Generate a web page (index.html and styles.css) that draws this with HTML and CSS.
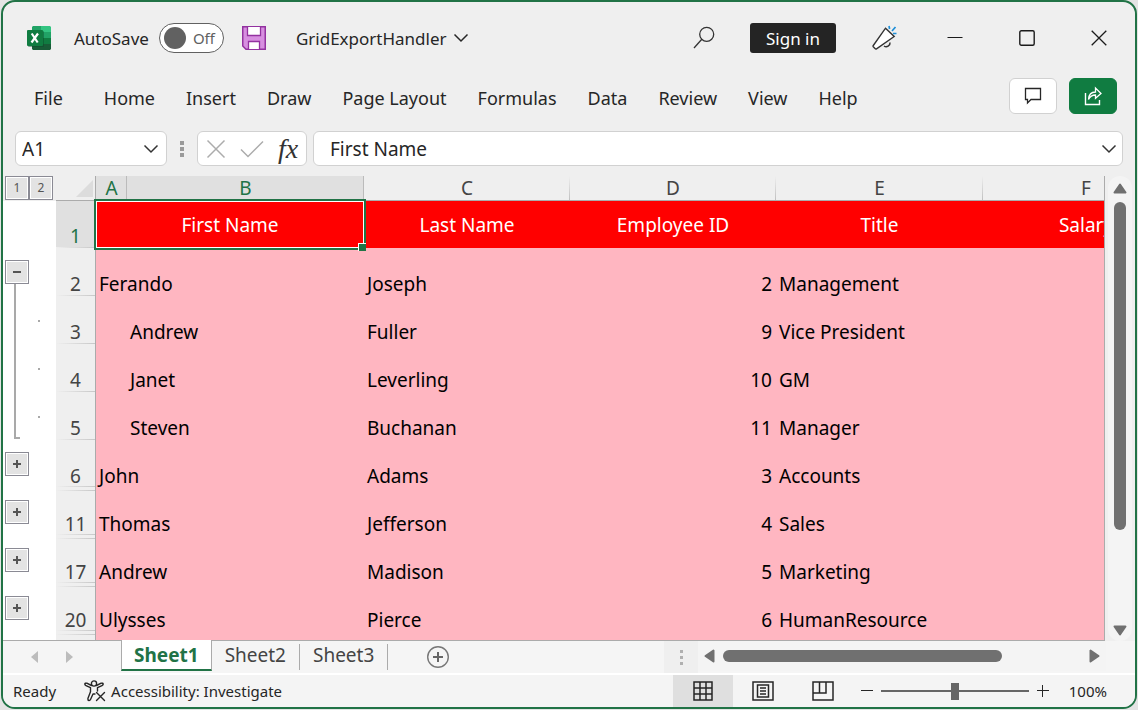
FILE: index.html
```html
<!DOCTYPE html>
<html lang="en">
<head>
<meta charset="utf-8">
<title>GridExportHandler</title>
<link rel="stylesheet" href="styles.css">
</head>
<body>
<div class="window">
  <header class="titlebar">
    <svg class="logo" width="24" height="24" viewBox="0 0 24 24" aria-hidden="true">
      <path fill="#21a366" d="M6 0h9v6H5V1z"/><path fill="#33c481" d="M14 0h9l1 1v5H14z"/>
      <path fill="#107c41" d="M5 6h9v6H5z"/><path fill="#21a366" d="M14 6h10v6H14z"/>
      <path fill="#185c37" d="M5 12h9v6h10v5l-1 1H6l-1-1z"/><path fill="#107c41" d="M14 12h10v6H14z"/>
      <rect x="1" y="5" width="16" height="16" rx="1" fill="#0b4a2a" opacity=".45"/>
      <rect x="0" y="4" width="16" height="16" rx="1" fill="#107c41"/>
      <path d="M4.700 7.500l6 9M11 7.500l-6.500 9" stroke="#fff" stroke-width="2.200" fill="none"/>
    </svg>
    <label class="autosave" for="autosave">AutoSave</label>
    <span class="toggle"><input id="autosave" type="checkbox" role="switch"><span class="toggle-text">Off</span></span>
    <button class="plain save" aria-label="Save">
      <svg width="24" height="24" viewBox="0 0 24 24"><path d="M.750.750h22.500v22.500H4L.750 20z" fill="#d78fe0" stroke="#9332a0" stroke-width="1.500"/><path d="M5.500 1v8.500h13V1" fill="#fff" stroke="#9332a0" stroke-width="1.300"/><path d="M6.500 23v-7.500h11V23" fill="#fff" stroke="#9332a0" stroke-width="1.300"/></svg>
    </button>
    <button class="plain doc">GridExportHandler
      <svg width="16" height="10" viewBox="0 0 16 10"><path d="M1.500 1.500L8 8l6.500-6.500" fill="none" stroke="#262626" stroke-width="1.500"/></svg>
    </button>
    <span class="grow"></span>
    <button class="plain search" aria-label="Search">
      <svg width="22" height="24" viewBox="0 0 22 24"><circle cx="13.700" cy="8.300" r="7" fill="none" stroke="#333" stroke-width="1.300"/><path d="M8.800 13.300L1 22" stroke="#333" stroke-width="1.300"/></svg>
    </button>
    <button class="signin">Sign in</button>
    <button class="plain news" aria-label="What's new">
      <svg width="26" height="26" viewBox="0 0 26 26"><path d="M12 21a3.800 3.800 0 0 0 6-3.500" fill="none" stroke="#333" stroke-width="1.500"/><path d="M13.500 3.200L22.200 11.500 4.500 23.800Q3.700 24.300 3 23.500L1.300 21.800Q.800 21.200 1.300 20.500z" fill="#fff" stroke="#333" stroke-width="1.400"/><path d="M17 1l.6 3M20 6l3.500-4M21 8.500h3.500" stroke="#1e8fd8" stroke-width="1.700"/></svg>
    </button>
    <button class="plain caption" aria-label="Minimize"><svg width="16" height="16" viewBox="0 0 16 16"><path d="M.5 7.500h15" stroke="#1b1b1b" stroke-width="1.200"/></svg></button>
    <button class="plain caption" aria-label="Maximize"><svg width="16" height="16" viewBox="0 0 16 16"><rect x=".8" y=".8" width="14.400" height="14.400" rx="1.500" fill="none" stroke="#1b1b1b" stroke-width="1.400"/></svg></button>
    <button class="plain caption" aria-label="Close"><svg width="16" height="16" viewBox="0 0 16 16"><path d="M.7.7l14.600 14.600M15.300.7L.7 15.300" stroke="#1b1b1b" stroke-width="1.300"/></svg></button>
  </header>

  <nav class="ribbon">
    <button class="plain file">File</button>
    <button class="plain">Home</button>
    <button class="plain">Insert</button>
    <button class="plain">Draw</button>
    <button class="plain">Page Layout</button>
    <button class="plain">Formulas</button>
    <button class="plain">Data</button>
    <button class="plain">Review</button>
    <button class="plain">View</button>
    <button class="plain">Help</button>
    <span class="grow"></span>
    <button class="action" aria-label="Comments"><svg width="18" height="18" viewBox="0 0 18 18"><path d="M1.500 1.500h15v11H7l-3.500 3.500v-3.500h-2z" fill="none" stroke="#262626" stroke-width="1.300"/></svg></button>
    <button class="action share" aria-label="Share"><svg width="18" height="20" viewBox="0 0 18 20"><path d="M1.500 7v11.500h14V14" fill="none" stroke="#fff" stroke-width="1.400"/><path d="M4.500 13.500c.3-5 3-7.500 7-7.500V2l5.500 5.500-5.500 4.800V9c-3.200 0-5.500 1.500-7 4.500z" fill="none" stroke="#fff" stroke-width="1.300"/></svg></button>
  </nav>

  <div class="formula-row">
    <div class="box name-box">
      <input type="text" value="A1" aria-label="Name box">
      <button class="plain" aria-label="Names"><svg width="16" height="10" viewBox="0 0 16 10"><path d="M1.500 1.500L8 8l6.500-6.500" fill="none" stroke="#333" stroke-width="1.500"/></svg></button>
    </div>
    <svg class="grip" width="4" height="16" viewBox="0 0 4 16" aria-hidden="true"><path d="M0 0h4v4H0zM0 6h4v4H0zM0 12h4v4H0z" fill="#9a9a9a"/></svg>
    <div class="box fx-box">
      <button class="plain" aria-label="Cancel"><svg width="20" height="20" viewBox="0 0 20 20"><path d="M1.500 1.500l17 17M18.500 1.500l-17 17" stroke="#acacac" stroke-width="1.500"/></svg></button>
      <button class="plain" aria-label="Enter"><svg width="24" height="18" viewBox="0 0 24 18"><path d="M1 9.500L8 16.500 23 1.500" fill="none" stroke="#acacac" stroke-width="1.500"/></svg></button>
      <button class="plain fx" aria-label="Insert function">fx</button>
    </div>
    <div class="box formula-box">
      <input type="text" value="First Name" aria-label="Formula bar">
      <button class="plain" aria-label="Expand formula bar"><svg width="16" height="10" viewBox="0 0 16 10"><path d="M1.500 1.500L8 8l6.500-6.500" fill="none" stroke="#333" stroke-width="1.500"/></svg></button>
    </div>
  </div>

  <main class="workspace">
    <div class="viewport">
      <table class="sheet">
        <colgroup><col class="c-outline"><col class="c-head"><col class="c-a"><col class="c-b"><col class="c-c"><col class="c-c"><col class="c-e"><col class="c-c"></colgroup>
        <thead>
          <tr>
            <td class="levels"><button class="mini">1</button><button class="mini">2</button></td>
            <td class="corner"><svg width="17" height="17" viewBox="0 0 17 17"><path d="M17 0v17H0z" fill="#dcdcdc"/></svg></td>
            <th class="on" scope="col">A</th><th class="on" scope="col">B</th><th scope="col">C</th><th scope="col">D</th><th scope="col">E</th><th scope="col">F</th>
          </tr>
        </thead>
        <tbody>
          <tr class="titles">
            <td class="outline"></td><th class="on" scope="row">1</th>
            <td class="selected" colspan="2">First Name</td><td>Last Name</td><td>Employee ID</td><td>Title</td><td>Salary</td>
          </tr>
          <tr><td class="outline stem"><button class="mini" aria-label="Collapse"><svg width="10" height="10" viewBox="0 0 10 10"><path d="M1 5h8" stroke="#555" stroke-width="2"/></svg></button></td><th scope="row">2</th><td colspan="2">Ferando</td><td>Joseph</td><td class="num">2</td><td>Management</td><td></td></tr>
          <tr><td class="outline branch"></td><th scope="row">3</th><td></td><td>Andrew</td><td>Fuller</td><td class="num">9</td><td>Vice President</td><td></td></tr>
          <tr><td class="outline branch"></td><th scope="row">4</th><td></td><td>Janet</td><td>Leverling</td><td class="num">10</td><td>GM</td><td></td></tr>
          <tr><td class="outline branch last"></td><th scope="row">5</th><td></td><td>Steven</td><td>Buchanan</td><td class="num">11</td><td>Manager</td><td></td></tr>
          <tr><td class="outline"><button class="mini" aria-label="Expand"><svg width="10" height="10" viewBox="0 0 10 10"><path d="M1 5h8M5 1v8" stroke="#555" stroke-width="2"/></svg></button></td><th class="fold" scope="row">6</th><td colspan="2">John</td><td>Adams</td><td class="num">3</td><td>Accounts</td><td></td></tr>
          <tr><td class="outline"><button class="mini" aria-label="Expand"><svg width="10" height="10" viewBox="0 0 10 10"><path d="M1 5h8M5 1v8" stroke="#555" stroke-width="2"/></svg></button></td><th class="fold after-fold" scope="row">11</th><td colspan="2">Thomas</td><td>Jefferson</td><td class="num">4</td><td>Sales</td><td></td></tr>
          <tr><td class="outline"><button class="mini" aria-label="Expand"><svg width="10" height="10" viewBox="0 0 10 10"><path d="M1 5h8M5 1v8" stroke="#555" stroke-width="2"/></svg></button></td><th class="fold after-fold" scope="row">17</th><td colspan="2">Andrew</td><td>Madison</td><td class="num">5</td><td>Marketing</td><td></td></tr>
          <tr><td class="outline"><button class="mini" aria-label="Expand"><svg width="10" height="10" viewBox="0 0 10 10"><path d="M1 5h8M5 1v8" stroke="#555" stroke-width="2"/></svg></button></td><th class="fold after-fold" scope="row">20</th><td colspan="2">Ulysses</td><td>Pierce</td><td class="num">6</td><td>HumanResource</td><td></td></tr>
          <tr><td class="outline"></td><th class="after-fold" scope="row"></th><td colspan="2"></td><td></td><td></td><td></td><td></td></tr>
        </tbody>
      </table>
    </div>
    <div class="vscroll">
      <button class="plain" aria-label="Scroll up"><svg width="14" height="11" viewBox="0 0 14 11"><path d="M7 1.500L12.500 9.500h-11z" fill="#707070" stroke="#707070" stroke-width="2" stroke-linejoin="round"/></svg></button>
      <div class="track"><div class="thumb"></div></div>
      <button class="plain" aria-label="Scroll down"><svg width="14" height="11" viewBox="0 0 14 11"><path d="M7 9.500L12.500 1.500h-11z" fill="#707070" stroke="#707070" stroke-width="2" stroke-linejoin="round"/></svg></button>
    </div>
  </main>

  <div class="tabs">
    <button class="plain arrow" aria-label="Previous sheet"><svg width="7" height="12" viewBox="0 0 7 12"><path d="M7 0v12L0 6z" fill="#bcbcbc"/></svg></button>
    <button class="plain arrow" aria-label="Next sheet"><svg width="7" height="12" viewBox="0 0 7 12"><path d="M0 0v12l7-6z" fill="#bcbcbc"/></svg></button>
    <button class="plain tab current">Sheet1</button>
    <button class="plain tab">Sheet2</button>
    <button class="plain tab">Sheet3</button>
    <button class="plain add" aria-label="New sheet"><svg width="24" height="24" viewBox="0 0 24 24"><circle cx="12" cy="12" r="10.300" fill="none" stroke="#777" stroke-width="1.400"/><path d="M7 12h10M12 7v10" stroke="#666" stroke-width="2"/></svg></button>
    <span class="grow"></span>
    <div class="splitter"><svg width="3" height="15" viewBox="0 0 3 15"><path d="M0 0h3v3H0zM0 6h3v3H0zM0 12h3v3H0z" fill="#b0b0b0"/></svg></div>
    <div class="hscroll">
      <button class="plain" aria-label="Scroll left"><svg width="11" height="14" viewBox="0 0 11 14"><path d="M1.500 7L9.500 1.500v11z" fill="#707070" stroke="#707070" stroke-width="2" stroke-linejoin="round"/></svg></button>
      <div class="track"><div class="thumb"></div></div>
      <button class="plain" aria-label="Scroll right"><svg width="11" height="14" viewBox="0 0 11 14"><path d="M9.500 7L1.500 1.500v11z" fill="#707070" stroke="#707070" stroke-width="2" stroke-linejoin="round"/></svg></button>
    </div>
  </div>

  <footer class="status">
    <span class="ready">Ready</span>
    <button class="plain access">
      <svg width="22" height="22" viewBox="0 0 22 22"><g fill="none" stroke="#262626" stroke-width="1.400" stroke-linejoin="round" stroke-linecap="round"><circle cx="10" cy="3.500" r="2.600"/><path d="M7.500 5.500L2.800 3.200Q1 2.800.8 4.200 1 5.300 2 5.700l4.500 2v4l-2.600 6.800q-.3 1.700 1 2 1.100.1 1.600-1L9 14h2"/><path d="M12.500 5.500l4.700-2.300q1.800-.4 2 1-.2 1.100-1.200 1.500l-4.500 2V11"/><path d="M12.500 12.500l8 8M20.500 12.500l-8 8"/></g></svg>
      Accessibility: Investigate
    </button>
    <span class="grow"></span>
    <button class="plain view active" aria-label="Normal view"><svg width="20" height="20" viewBox="0 0 20 20"><path d="M1 1h18v18H1zM7 1v18M13 1v18M1 7h18M1 13h18" fill="none" stroke="#262626" stroke-width="1.500"/></svg></button>
    <button class="plain view" aria-label="Page layout view"><svg width="22" height="20" viewBox="0 0 22 20"><path d="M1 1h20v18H1zM5.500 4h11v12h-11z" fill="none" stroke="#262626" stroke-width="1.500"/><path d="M8 7h6M8 10h6M8 13h6" stroke="#262626" stroke-width="1.300"/></svg></button>
    <button class="plain view" aria-label="Page break preview"><svg width="22" height="20" viewBox="0 0 22 20"><path d="M1 1h20v18H1zM1 12h13V1M7.500 1v11" fill="none" stroke="#262626" stroke-width="1.500"/></svg></button>
    <button class="plain step" aria-label="Zoom out"><svg width="12" height="12" viewBox="0 0 12 12"><path d="M0 5.500h12" stroke="#262626" stroke-width="1"/></svg></button>
    <input class="zoom" type="range" min="0" max="100" value="50" aria-label="Zoom">
    <button class="plain step" aria-label="Zoom in"><svg width="12" height="12" viewBox="0 0 12 12"><path d="M0 5.500h12M5.500 0v12" stroke="#262626" stroke-width="1"/></svg></button>
    <span class="percent">100%</span>
  </footer>
</div>
</body>
</html>
```
FILE: styles.css
```css
* { box-sizing: border-box; }
html, body { height: 100%; }
body {
  margin: 0;
  padding: 0 1px 1px;
  background: #e4e4e4;
  color: #262626;
  font-family: "Noto Sans", "Open Sans", sans-serif;
  font-size: 17px;
}
svg { display: block; flex: none; }
button, input { font: inherit; color: inherit; }
.plain {
  display: flex;
  align-items: center;
  justify-content: center;
  padding: 0;
  border: 0;
  background: none;
  white-space: nowrap;
}
.grow { flex: 1; }

.window {
  display: flex;
  flex-direction: column;
  height: 100%;
  border: 2px solid #217346;
  border-radius: 14px;
  background: #efefef;
  overflow: hidden;
}

/* Title bar */
.titlebar { display: flex; align-items: center; height: 72px; padding-left: 24px; }
.autosave { margin-left: 23px; }
.toggle {
  display: flex;
  align-items: center;
  width: 65px;
  height: 30px;
  margin-left: 10px;
  padding-left: 4px;
  border: 1px solid #616161;
  border-radius: 15px;
  background: #fff;
}
.toggle input {
  width: 22px;
  height: 22px;
  margin: 0 7px 0 0;
  border-radius: 50%;
  background: #616161;
  appearance: none;
}
.toggle-text { color: #616161; font-size: 15px; }
.save { margin-left: 18px; }
.doc { gap: 6px; margin-left: 30px; }
.search { margin-right: 35px; }
.signin {
  height: 30px;
  width: 86px;
  padding: 0;
  border: 0;
  border-radius: 3px;
  background: #242424;
  color: #fff;
}
.news { margin: 0 21px 0 36px; }
.caption { width: 72px; height: 48px; }

/* Ribbon */
.ribbon {
  display: flex;
  align-items: center;
  gap: 31px;
  height: 48px;
  padding: 0 18px 0 31px;
  font-size: 18px;
}
.ribbon .file { margin-right: 10px; }
.action {
  display: flex;
  align-items: center;
  justify-content: center;
  width: 48px;
  height: 36px;
  margin-bottom: 4px;
  padding: 0;
  border: 1px solid #d1d1d1;
  border-radius: 6px;
  background: #fff;
}
.share { margin-left: -19px; border-color: #107c41; background: #107c41; }

/* Formula bar */
.formula-row { display: flex; align-items: center; height: 54px; padding: 0 12px 1px; }
.box {
  display: flex;
  align-items: center;
  height: 35px;
  border: 1px solid #d1d1d1;
  border-radius: 6px;
  background: #fff;
}
.box input { flex: 1; min-width: 0; padding: 0; border: 0; outline: 0; background: none; font-size: 19px; }
.name-box { width: 152px; padding: 0 7px 0 6px; }
.grip { margin: 0 13px; }
.fx-box { gap: 14px; width: 110px; padding-left: 8px; }
.fx { color: #333; font: italic 28px/28px "Liberation Serif", serif; }
.formula-box { flex: 1; margin-left: 6px; padding: 0 5px 0 16px; }

/* Sheet */
.workspace { display: flex; flex: 1; min-height: 0; }
.viewport {
  flex: 1;
  min-width: 0;
  overflow: hidden;
  border-right: 1px solid #ababab;
  border-bottom: 1px solid #ababab;
}
.sheet { width: 1186px; table-layout: fixed; border-collapse: separate; border-spacing: 0; font-size: 19px; line-height: 24px; color: #000; }
.c-outline { width: 53px; }
.c-head { width: 40px; }
.c-a { width: 31px; }
.c-b { width: 237px; }
.c-c { width: 206px; }
.c-e { width: 207px; }
.sheet td { padding: 0 3px; }
.sheet th { padding: 0; color: #444; font-weight: 400; }
.sheet thead th, .sheet thead td { height: 25px; background: #efefef; border-bottom: 1px solid #ababab; }
.sheet thead th { background: linear-gradient(#efefef, #c0c0c0) right / 1px 100% no-repeat #efefef; }
.sheet thead .on { background: linear-gradient(#bbb, #bbb) right / 1px 100% no-repeat #e0e0e0; }
.sheet thead .levels { padding: 0 2px; border: 0; vertical-align: top; font-size: 0; line-height: 0; }
.sheet .corner { padding: 4px 3px 3px 20px; border-right: 1px solid #ababab; }
.mini {
  display: inline-flex;
  align-items: center;
  justify-content: center;
  width: 24px;
  height: 24px;
  padding: 0;
  border: 1px solid #8a8a94;
  background: #e3e3e3;
  box-shadow: inset 0 0 0 1px #fff;
  color: #555;
  font-size: 12px;
  vertical-align: top;
}
.sheet tbody tr { height: 48px; }
.sheet tbody .titles { height: 47px; }
.sheet tbody td { background: #ffb6c1; vertical-align: bottom; }
.sheet .titles td { background: #f00; color: #fff; text-align: center; vertical-align: middle; }
.sheet tbody .outline { padding: 0 2px; background: #fff; vertical-align: middle; font-size: 0; line-height: 0; }
.sheet tbody th {
  border-right: 1px solid #ababab;
  background: linear-gradient(90deg, #efefef, #c8c8c8) 0 100% / 100% 1px no-repeat #efefef;
  vertical-align: bottom;
}
.sheet tbody th.fold { background: linear-gradient(90deg, #efefef, #c8c8c8) 0 46px / 100% 1px no-repeat #efefef; }
.sheet tbody th.after-fold { background: linear-gradient(90deg, #efefef, #c8c8c8) 0 2px / 100% 1px no-repeat #efefef; }
.sheet tbody th.fold.after-fold {
  background:
    linear-gradient(90deg, #efefef, #c8c8c8) 0 46px / 100% 1px no-repeat,
    linear-gradient(90deg, #efefef, #c8c8c8) 0 2px / 100% 1px no-repeat #efefef;
}
.sheet .on { color: #217346; }
.sheet tbody .on { background-color: #e0e0e0; }
.sheet .num { padding-right: 4px; text-align: right; }
.sheet tbody .outline.stem { background: linear-gradient(#a9a9a9, #a9a9a9) 11px 100% / 2px 14px no-repeat #fff; }
.sheet tbody .outline.branch {
  background:
    linear-gradient(#a9a9a9, #a9a9a9) 11px 0 / 2px 100% no-repeat,
    linear-gradient(#a9a9a9, #a9a9a9) 35px 24px / 2px 2px no-repeat #fff;
}
.sheet tbody .outline.last {
  background:
    linear-gradient(#a9a9a9, #a9a9a9) 11px 0 / 2px 47px no-repeat,
    linear-gradient(#a9a9a9, #a9a9a9) 11px 45px / 6px 2px no-repeat,
    linear-gradient(#a9a9a9, #a9a9a9) 35px 24px / 2px 2px no-repeat #fff;
}
.sheet .selected { position: relative; }
.selected::before {
  content: "";
  position: absolute;
  inset: -2px;
  border: 2px solid #217346;
  box-shadow: inset 0 0 0 1px #fff;
}
.selected::after {
  content: "";
  position: absolute;
  right: -2px;
  bottom: -3px;
  width: 7px;
  height: 7px;
  border: 1px solid #fff;
  border-width: 1px 0 0 1px;
  background: #217346;
}

/* Scroll bars */
.thumb { border-radius: 6px; background: #707070; }
.vscroll {
  display: flex;
  flex-direction: column;
  align-items: center;
  gap: 8px;
  width: 24px;
  margin: 0 3px;
  padding: 7px 0 5px;
  border-radius: 12px;
  background: #f4f4f4;
}
.vscroll .track { flex: 1; width: 12px; }
.vscroll .thumb { height: 79%; }

/* Sheet tabs */
.tabs { display: flex; height: 34px; background: #f5f5f5; border-bottom: 2px solid #fff; }
.arrow { width: 35px; }
.arrow:first-child { margin-left: 14px; }
.tab {
  position: relative;
  height: 26px;
  margin-top: 3px;
  padding: 0 13px 4px;
  border-right: 1px solid #ababab;
  color: #444;
  font-size: 19px;
}
.tab.current {
  height: 31px;
  margin: -1px 0 0 34px;
  padding: 0 12px;
  border: solid #ababab;
  border-width: 0 1px 2px;
  border-bottom-color: #217346;
  background: #fff;
  color: #217346;
  font-weight: 700;
}
.add { margin-left: 38px; }
.splitter { display: flex; align-items: center; justify-content: center; width: 34px; background: #efefef; }
.hscroll { display: flex; align-items: center; flex: none; gap: 8px; width: 36%; margin-right: 29px; padding: 0 6px; height: 30px; background: #f4f4f4; }
.hscroll .track { flex: 1; height: 12px; }
.hscroll .thumb { width: 78%; height: 12px; }

/* Status bar */
.status { display: flex; align-items: center; height: 32px; padding: 0 28px 0 10px; background: #f4f4f4; font-size: 15px; }
.access { gap: 5px; margin-left: 28px; }
.view { width: 60px; height: 32px; }
.view.active { background: #dfdfdf; }
.step { width: 12px; }
.view + .step { margin-left: 8px; }
.zoom { width: 148px; height: 18px; margin: 0 8px; background: linear-gradient(#666, #666) center / 100% 2px no-repeat; appearance: none; }
.zoom::-webkit-slider-thumb { width: 8px; height: 17px; background: #666; appearance: none; }
.percent { width: 58px; text-align: right; }
```
